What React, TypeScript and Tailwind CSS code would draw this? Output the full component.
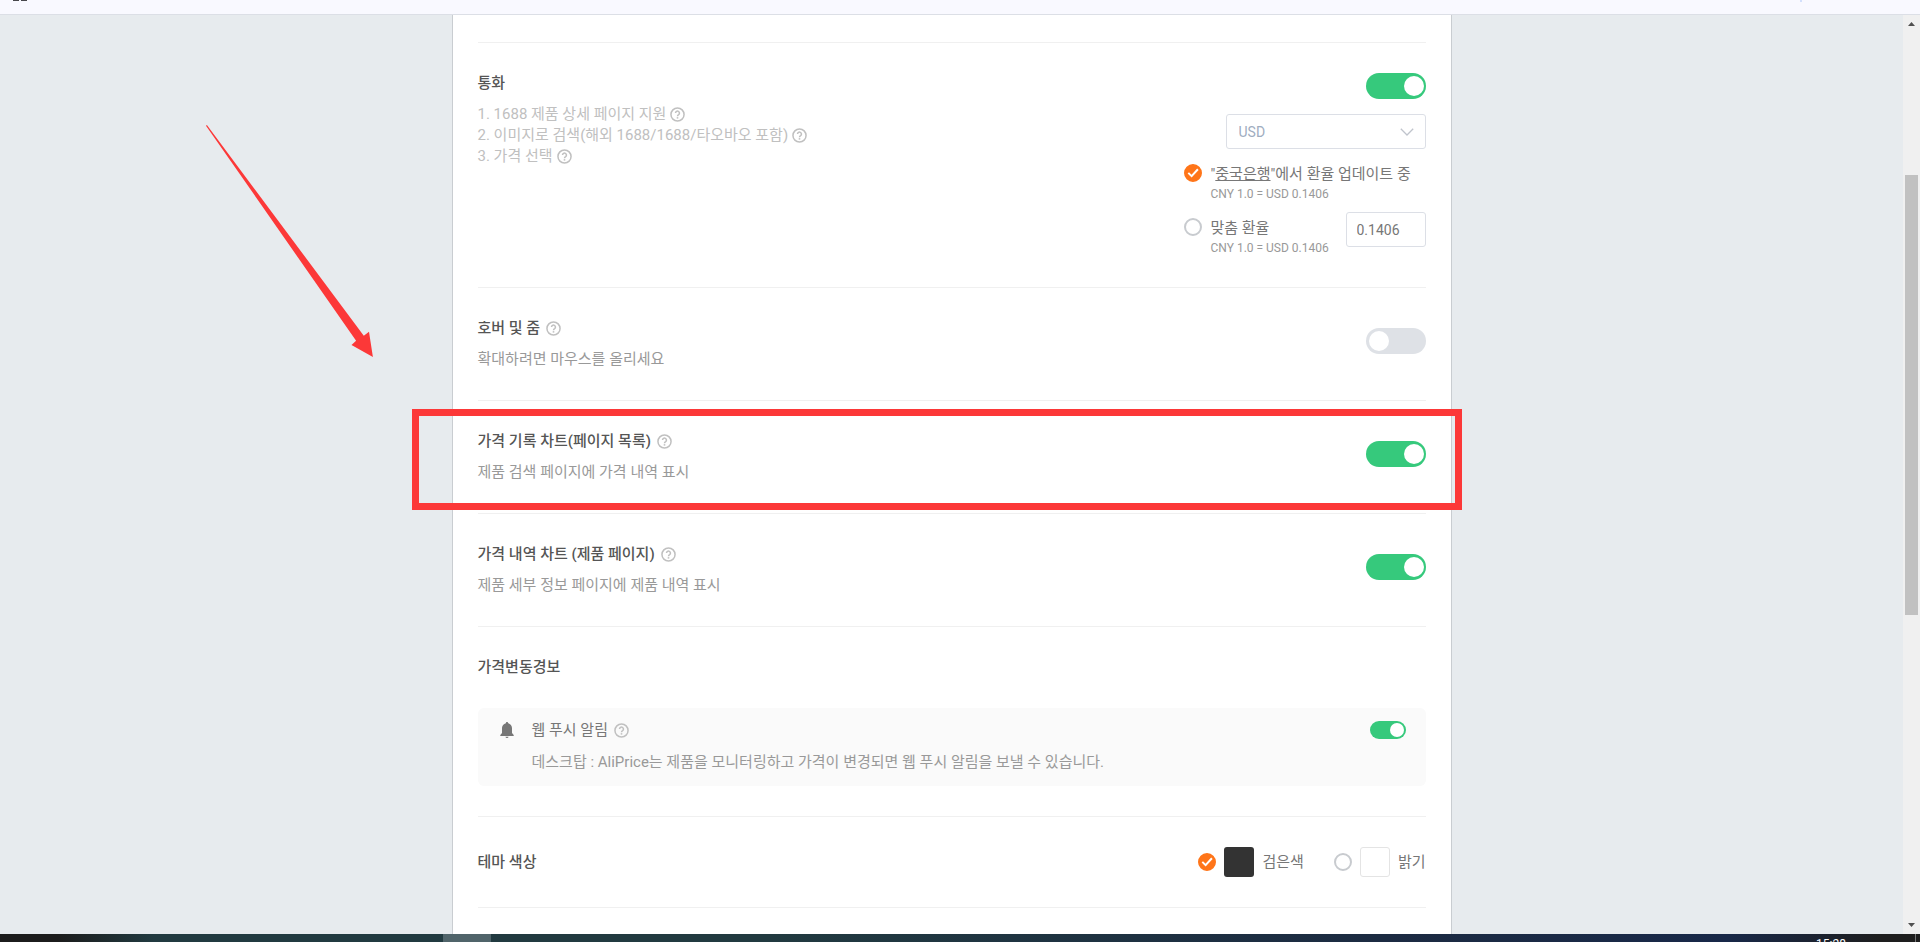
import { useState } from "react";
import type { ReactNode } from "react";

function HelpIcon() {
  return (
    <svg viewBox="0 0 16 16" className="size-[15px] shrink-0 text-[#c0c0c0]" fill="none" stroke="currentColor" aria-hidden="true">
      <circle cx="8" cy="8" r="7" strokeWidth="1.6" />
      <path d="M5.9 6.5a2.1 2.1 0 1 1 3.3 1.7C8.4 8.7 8 9 8 9.8" strokeWidth="1.6" />
      <path d="M8 10.8v1.6" strokeWidth="1.7" />
    </svg>
  );
}

function BellIcon() {
  return (
    <svg viewBox="0 0 14 16" className="h-4 w-3.5 shrink-0 fill-[#777]" aria-hidden="true">
      <path d="M7 0c-.7 0-1.1.5-1.1 1.2C3.5 1.8 2 3.7 2 6v5L.3 13v1h13.4v-1L12 11V6c0-2.3-1.5-4.2-3.9-4.8C8.1.5 7.7 0 7 0zM5.5 14.7a1.5 1.3 0 0 0 3 0z" />
    </svg>
  );
}

function Switch({ label, on, small }: { label: string; on: boolean; small?: boolean }) {
  const size = small
    ? "h-[18px] w-9 after:size-3.5 after:top-0.5 after:left-0.5 checked:after:left-5"
    : "h-[26px] w-[60px] after:size-5 after:top-[3px] after:left-[3px] checked:after:left-[38px]";
  return (
    <input
      type="checkbox"
      role="switch"
      aria-label={label}
      defaultChecked={on}
      className={`relative shrink-0 cursor-pointer appearance-none rounded-full bg-[#dee1e6] checked:bg-[#36c97c] after:absolute after:rounded-full after:bg-white after:content-[''] ${size}`}
    />
  );
}

type RadioProps = { id: string; name: string; checked: boolean; onChange: () => void };

function Radio({ id, name, checked, onChange }: RadioProps) {
  return (
    <span className="grid size-[18px] shrink-0 place-items-center">
      <input
        id={id}
        type="radio"
        name={name}
        checked={checked}
        onChange={onChange}
        className="peer col-start-1 row-start-1 size-[18px] cursor-pointer appearance-none rounded-full border-2 border-[#c8cbcf] bg-white checked:border-[#ff7519] checked:bg-[#ff7519]"
      />
      <svg
        viewBox="0 0 18 18"
        className="pointer-events-none invisible z-10 col-start-1 row-start-1 size-[18px] peer-checked:visible"
        fill="none"
        stroke="white"
        strokeWidth="2"
        aria-hidden="true"
      >
        <path d="M4.3 8.9l3.3 3.2 6.3-6.8" />
      </svg>
    </span>
  );
}

function Title({ children, help }: { children: ReactNode; help?: boolean }) {
  return (
    <h2 className="flex items-center gap-1.5 leading-5 font-medium text-[#555]">
      {children}
      {help && <HelpIcon />}
    </h2>
  );
}

const row = "relative flex justify-between border-b border-[#f0f0f0] py-[30px]";

function ToggleRow({ title, desc, on, marked }: { title: string; desc: string; on: boolean; marked?: boolean }) {
  return (
    <section className={`${row} min-h-[113px]`}>
      <div>
        <Title help>{title}</Title>
        <p className="mt-[11px] leading-5 text-[#999]">{desc}</p>
      </div>
      <div className="pt-2.5 leading-none">
        <Switch label={title} on={on} />
      </div>
      {marked && (
        <div className="pointer-events-none absolute top-2 -right-9 -left-[66px] h-[101px] border-[7px] border-[#fc3838]" />
      )}
    </section>
  );
}

const currencyFeatures = [
  "1. 1688 제품 상세 페이지 지원",
  "2. 이미지로 검색(해외 1688/1688/타오바오 포함)",
  "3. 가격 선택",
];

function CurrencyRow() {
  const [source, setSource] = useState("bank");

  return (
    <section className={row}>
      <div>
        <Title>통화</Title>
        <ul className="mt-[11px] leading-[21px] text-[#c0c0c0]">
          {currencyFeatures.map((text) => (
            <li key={text} className="flex items-center gap-1">
              {text}
              <HelpIcon />
            </li>
          ))}
        </ul>
      </div>
      <div className="flex w-[242px] flex-col">
        <div className="flex justify-end">
          <Switch label="통화" on />
        </div>
        <div className="relative mt-[15px] w-[200px] self-end">
          <select
            aria-label="통화 선택"
            className="h-[35px] w-full appearance-none rounded-[3px] border border-[#dcdfe6] bg-white px-3 text-sm text-[#9fadbf]"
          >
            <option>USD</option>
            <option>CNY</option>
          </select>
          <svg
            viewBox="0 0 14 8"
            className="pointer-events-none absolute top-3.5 right-3 h-2 w-3.5"
            fill="none"
            stroke="#c0c4cc"
            strokeWidth="1.3"
            aria-hidden="true"
          >
            <path d="M.8.8L7 7 13.2.8" />
          </svg>
        </div>
        <div className="mt-3.5 flex gap-[9px]">
          <div className="flex h-5 items-center">
            <Radio id="rate-bank" name="rate" checked={source === "bank"} onChange={() => setSource("bank")} />
          </div>
          <label htmlFor="rate-bank" className="leading-[22px] whitespace-nowrap text-[#777]">
            "<a href="#bank" className="underline">중국은행</a>"에서 환율 업데이트 중
            <span className="block text-xs leading-[18px] text-[#999]">CNY 1.0 = USD 0.1406</span>
          </label>
        </div>
        <div className="mt-[9px] flex gap-[9px]">
          <div className="mt-[5px] flex h-5 items-center">
            <Radio id="rate-custom" name="rate" checked={source === "custom"} onChange={() => setSource("custom")} />
          </div>
          <label htmlFor="rate-custom" className="mt-[5px] leading-[22px] whitespace-nowrap text-[#777]">
            맞춤 환율
            <span className="block text-xs leading-[18px] text-[#999]">CNY 1.0 = USD 0.1406</span>
          </label>
          <input
            type="text"
            aria-label="맞춤 환율 값"
            defaultValue="0.1406"
            className="ml-auto h-[35px] w-20 rounded-[3px] border border-[#dcdfe6] px-2.5 text-sm text-[#777]"
          />
        </div>
      </div>
    </section>
  );
}

function ThemeRow() {
  const [theme, setTheme] = useState("dark");

  return (
    <section className={`${row} items-center`}>
      <Title>테마 색상</Title>
      <div className="flex gap-[30px] leading-5 text-[#777]">
        <label htmlFor="theme-dark" className="flex items-center gap-2">
          <Radio id="theme-dark" name="theme" checked={theme === "dark"} onChange={() => setTheme("dark")} />
          <span className="size-[30px] rounded-[3px] bg-[#333]" />
          검은색
        </label>
        <label htmlFor="theme-light" className="flex items-center gap-2">
          <Radio id="theme-light" name="theme" checked={theme === "light"} onChange={() => setTheme("light")} />
          <span className="size-[30px] rounded-[3px] border border-[#e4e4e4] bg-white" />
          밝기
        </label>
      </div>
    </section>
  );
}

function Scrollbar() {
  return (
    <div className="flex w-[17px] shrink-0 flex-col items-center bg-[#f0f0f0]" aria-hidden="true">
      <svg viewBox="0 0 17 17" className="size-[17px] shrink-0 fill-[#505050]">
        <path d="M5 11l3.5-4 3.5 4z" />
      </svg>
      <div className="grow-[143]" />
      <div className="w-[13px] grow-[440] bg-[#c1c1c1]" />
      <div className="grow-[302]" />
      <svg viewBox="0 0 17 17" className="size-[17px] shrink-0 fill-[#505050]">
        <path d="M5 6l3.5 4L12 6z" />
      </svg>
    </div>
  );
}

export default function App() {
  return (
    <div className="relative flex h-screen flex-col overflow-hidden bg-[#e7ebee] font-[Roboto,'Noto_Sans_CJK_KR',sans-serif] text-[15px]">
      <header className="flex h-[15px] shrink-0 items-start gap-0.5 border-b border-[#dcdfe6] bg-[#f9f9ff] pl-[13px]">
        <span className="h-px w-1.5 bg-[#47474b]" />
        <span className="h-px w-1.5 bg-[#47474b]" />
        <span className="mr-[118px] ml-auto h-0.5 w-0.5 bg-[#d3e0fc]" />
      </header>

      <div className="flex min-h-0 flex-1">
        <main className="flex min-w-0 flex-1 justify-center overflow-hidden">
          <div className="w-[1000px] border-x border-[#c9cdd1] bg-white px-[25px]">
            <div className="h-7 border-b border-[#f0f0f0]" />
            <CurrencyRow />
            <ToggleRow title="호버 및 줌" desc="확대하려면 마우스를 올리세요" on={false} />
            <ToggleRow title="가격 기록 차트(페이지 목록)" desc="제품 검색 페이지에 가격 내역 표시" on marked />
            <ToggleRow title="가격 내역 차트 (제품 페이지)" desc="제품 세부 정보 페이지에 제품 내역 표시" on />
            <section className="border-b border-[#f0f0f0] py-[30px]">
              <Title>가격변동경보</Title>
              <div className="mt-[31px] flex items-start rounded-md bg-[#fafafa] pt-3 pr-5 pb-3.5 pl-[22px]">
                <div className="flex h-5 items-center">
                  <BellIcon />
                </div>
                <div className="ml-[18px] flex-1">
                  <h3 className="flex items-center gap-1.5 leading-5 text-[#777]">
                    웹 푸시 알림
                    <HelpIcon />
                  </h3>
                  <p className="mt-3 leading-5 text-[#999]">
                    데스크탑 : AliPrice는 제품을 모니터링하고 가격이 변경되면 웹 푸시 알림을 보낼 수 있습니다.
                  </p>
                </div>
                <div className="flex h-5 items-center">
                  <Switch label="웹 푸시 알림" on small />
                </div>
              </div>
            </section>
            <ThemeRow />
          </div>
        </main>
        <Scrollbar />
      </div>

      {/* top edge of the taskbar, the clock only peeks in */}
      <footer className="flex h-2 shrink-0 justify-between overflow-hidden bg-[linear-gradient(90deg,#1c1c1c_0,#1c1c1c_3%,#213a40_8%,#213a40_40%,#1c2b42_72%,#182848_90%,#1e1e1e_98%)]">
        <span className="ml-[443px] w-12 bg-[#50646a]" />
        <span className="mr-1 flex h-full border-r border-[#777]">
          <time className="mt-1 mr-[69px] text-xs leading-3 text-white">15:28</time>
        </span>
      </footer>

      <svg viewBox="0 0 168 233" className="pointer-events-none absolute top-[125px] left-[206px] h-[233px] w-[168px] fill-[#fc3838]" aria-hidden="true">
        <path d="M0 .7L.9 0 157.8 210.7 163 206.8 166.9 232 145.5 220l4.6-4.2z" />
      </svg>
    </div>
  );
}
